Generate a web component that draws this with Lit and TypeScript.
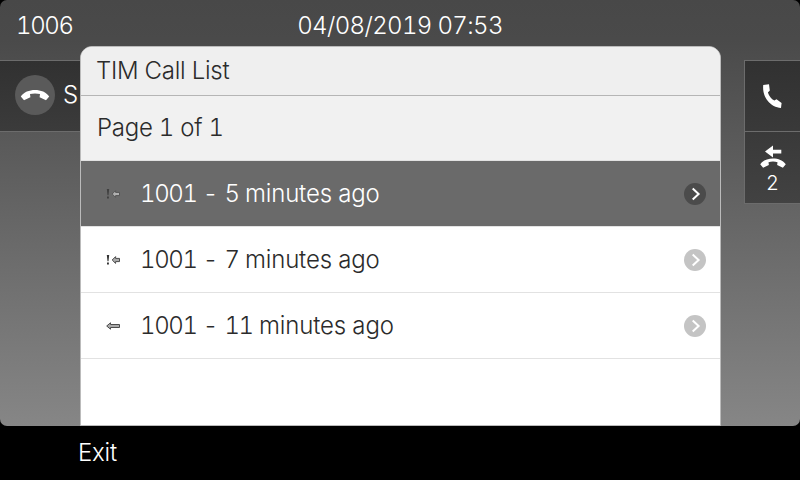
import { LitElement, html, css, svg } from "lit";
import { customElement } from "lit/decorators.js";
import { classMap } from "lit/directives/class-map.js";

type CallKind = "missed" | "received";
interface Call { kind: CallKind; number: string; age: string; selected?: boolean }

const calls: Call[] = [
  { kind: "missed", number: "1001", age: "5", selected: true },
  { kind: "missed", number: "1001", age: "7" },
  { kind: "received", number: "1001", age: "11" },
];

const handset = "M-14.2 1.4C-8.5-7.2 8.5-7.2 14.2 1.4L11 5.3L4.6 2.2L5-.9C2-1.8-2-1.8-5-.9L-4.6 2.2L-11 5.3Z";

@customElement("app-root")
export class AppRoot extends LitElement {
  static styles = css`
    :host { display: block; width: 800px; height: 480px; background: #000; overflow: hidden;
      font-family: Inter, "Liberation Sans", sans-serif; font-weight: 300; font-size: 24px; color: #fff;
      font-variant-numeric: tabular-nums; }
    .phone { position: relative; display: flex; flex-direction: column; height: 480px; }
    .screen { height: 426px; border-radius: 7px; overflow: hidden; display: flex; flex-direction: column;
      background: linear-gradient(#484848 0, #4a4a4a 40px, #585858 130px, #868686 426px); }
    .status { height: 60px; box-sizing: border-box; display: grid; grid-template-columns: 1fr auto 1fr;
      padding: 11px 16px 0; line-height: 30px; letter-spacing: -0.65px; }
    .digits { letter-spacing: -1.4px; }
    .desk { display: flex; justify-content: space-between; align-items: flex-start; }
    .line { box-sizing: border-box; width: 90px; height: 72px; display: flex; align-items: center; gap: 8px;
      padding: 0 0 3px 15px; background: linear-gradient(#313131, #3b3b3b);
      border: solid #6c6c6c; border-width: 1px 0; }
    .badge { width: 40px; height: 40px; flex: none; }
    .keys { width: 56px; box-sizing: border-box; border: 1px solid #6c6c6c; border-right: 0;
      background: linear-gradient(#313131, #424242); }
    .key { height: 70px; box-sizing: border-box; display: flex; flex-direction: column; align-items: center;
      font-size: 20px; line-height: 26px; }
    .key + .key { height: 72px; border-top: 1px solid #6c6c6c; }
    .key svg { display: block; flex: none; }
    .softkeys { height: 54px; padding-left: 78px; line-height: 53px; letter-spacing: -0.2px; }
    .dialog { position: absolute; left: 80px; top: 46px; width: 641px; height: 380px; box-sizing: border-box;
      border: 1px solid #bbb; border-radius: 12px 12px 0 0; overflow: hidden; background: #fff; color: #2b2b2b; }
    .title { height: 49px; box-sizing: border-box; background: #efefef; border-bottom: 1px solid #b5b5b5;
      padding-left: 15px; line-height: 47px; letter-spacing: -0.25px; }
    .page { height: 65px; box-sizing: border-box; background: #f1f1f1; border-bottom: 1px solid #e2e2e2;
      padding-left: 16px; line-height: 64px; letter-spacing: -0.25px; }
    .row { height: 66px; box-sizing: border-box; border-bottom: 1px solid #e2e2e2; display: flex;
      align-items: center; padding: 0 14px 0 24px; }
    .row.selected { background: #6a6a6a; color: #fff; }
    .label { flex: 1; padding-left: 19px; line-height: 29px; letter-spacing: -0.15px; }
    .row svg { flex: none; }
    .bang { fill: #333; }
    .arrow { fill: #aaa; stroke: #4c4c4c; }
    .selected .bang { fill: #404040; }
    .selected .arrow { fill: #b0b0b0; stroke: #555; }
    .disc { fill: #c4c4c4; }
    .selected .disc { fill: #4b4b4b; }
  `;

  private kindIcon(kind: CallKind) {
    return html`<svg width="16" height="15" viewBox="0 0 16 15">
      ${kind === "missed"
        ? svg`<path class="bang" d="M1.8 3H4.2L3.5 9.2H2.5ZM2 10.5H3.9V12.5H2Z"/>
              <path class="arrow" d="M7.2 8L10.6 4.6V6.4H14.5V9.6H10.6V11.4Z"/>`
        : svg`<path class="arrow" d="M1.7 8L5.5 4.8V6.5H14.5V9.5H5.5V11.2Z"/>`}
    </svg>`;
  }

  render() {
    return html`<div class="phone">
      <div class="screen">
        <div class="status"><span class="digits">1006</span><span>04/08/2019 07:53</span></div>
        <div class="desk">
          <div class="line">
            <svg class="badge" viewBox="-20 -20 40 40"><circle r="20" fill="#5a5a5a"/><path d=${handset} fill="#fff"/></svg>
            <span>S</span>
          </div>
          <div class="keys">
            <div class="key"><svg width="56" height="70" viewBox="0 0 56 70">
              <path fill="#fff" d="M18.2 24L24 23.2L24.8 29.6L22.9 31.4C24 35 26.3 37.8 29.4 39.6L31.5 38.2L36.6 42L36 47C26 46.2 17 37 18.2 24Z"/></svg></div>
            <div class="key"><svg width="56" height="38" viewBox="0 0 56 38">
              <path fill="#fff" d="M20 19.5L28 13.6V17.7H36.3V21.4H28V25.4Z"/>
              <path transform="translate(28 31) scale(.9)" d=${handset} fill="#fff"/></svg><span>2</span></div>
          </div>
        </div>
      </div>
      <div class="softkeys">Exit</div>
      <div class="dialog">
        <div class="title">TIM Call List</div>
        <div class="page">Page 1 of 1</div>
        ${calls.map((c) => html`<div class=${classMap({ row: true, selected: !!c.selected })}>
          ${this.kindIcon(c.kind)}
          <span class="label"><span class="digits">${c.number}</span> - <span class="digits">${c.age}</span> minutes ago</span>
          <svg width="22" height="22" viewBox="0 0 22 22"><circle class="disc" cx="11" cy="11" r="11"/>
            <path d="M8.7 5.6L14.6 11L8.7 16.4" fill="none" stroke="#fff" stroke-width="2"/></svg>
        </div>`)}
      </div>
    </div>`;
  }
}
